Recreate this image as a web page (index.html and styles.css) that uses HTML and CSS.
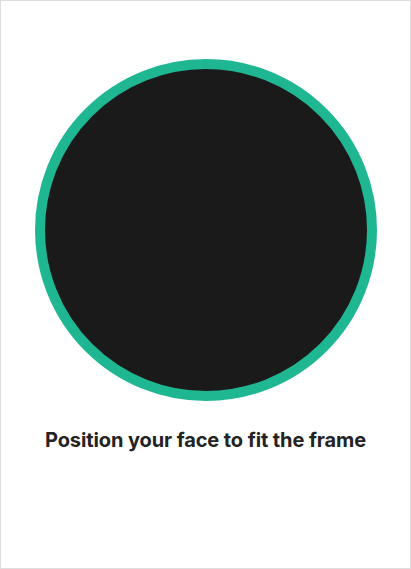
FILE: index.html
```html
<!DOCTYPE html>
<html lang="en">
<head>
<meta charset="utf-8">
<title>Face capture</title>
<link rel="stylesheet" href="styles.css">
</head>
<body>
<main class="screen">
  <div class="frame" aria-label="Camera preview"></div>
  <p class="hint">Position your face to fit the frame</p>
</main>
</body>
</html>
```

FILE: styles.css
```css
html, body {
  margin: 0;
  padding: 0;
  background: #ffffff;
}

.screen {
  box-sizing: border-box;
  width: 411px;
  height: 569px;
  border: 1px solid #dedede;
  display: flex;
  flex-direction: column;
  align-items: center;
  padding-top: 58px;
  font-family: Inter, "Liberation Sans", sans-serif;
}

.frame {
  box-sizing: border-box;
  width: 342px;
  height: 342px;
  border-radius: 50%;
  border: 10px solid #1fb692;
  background: #1b1a1a;
}

.hint {
  margin: 27px 0 0;
  font-size: 20px;
  line-height: 24px;
  font-weight: 700;
  color: #232323;
  letter-spacing: -0.1px;
}
```
